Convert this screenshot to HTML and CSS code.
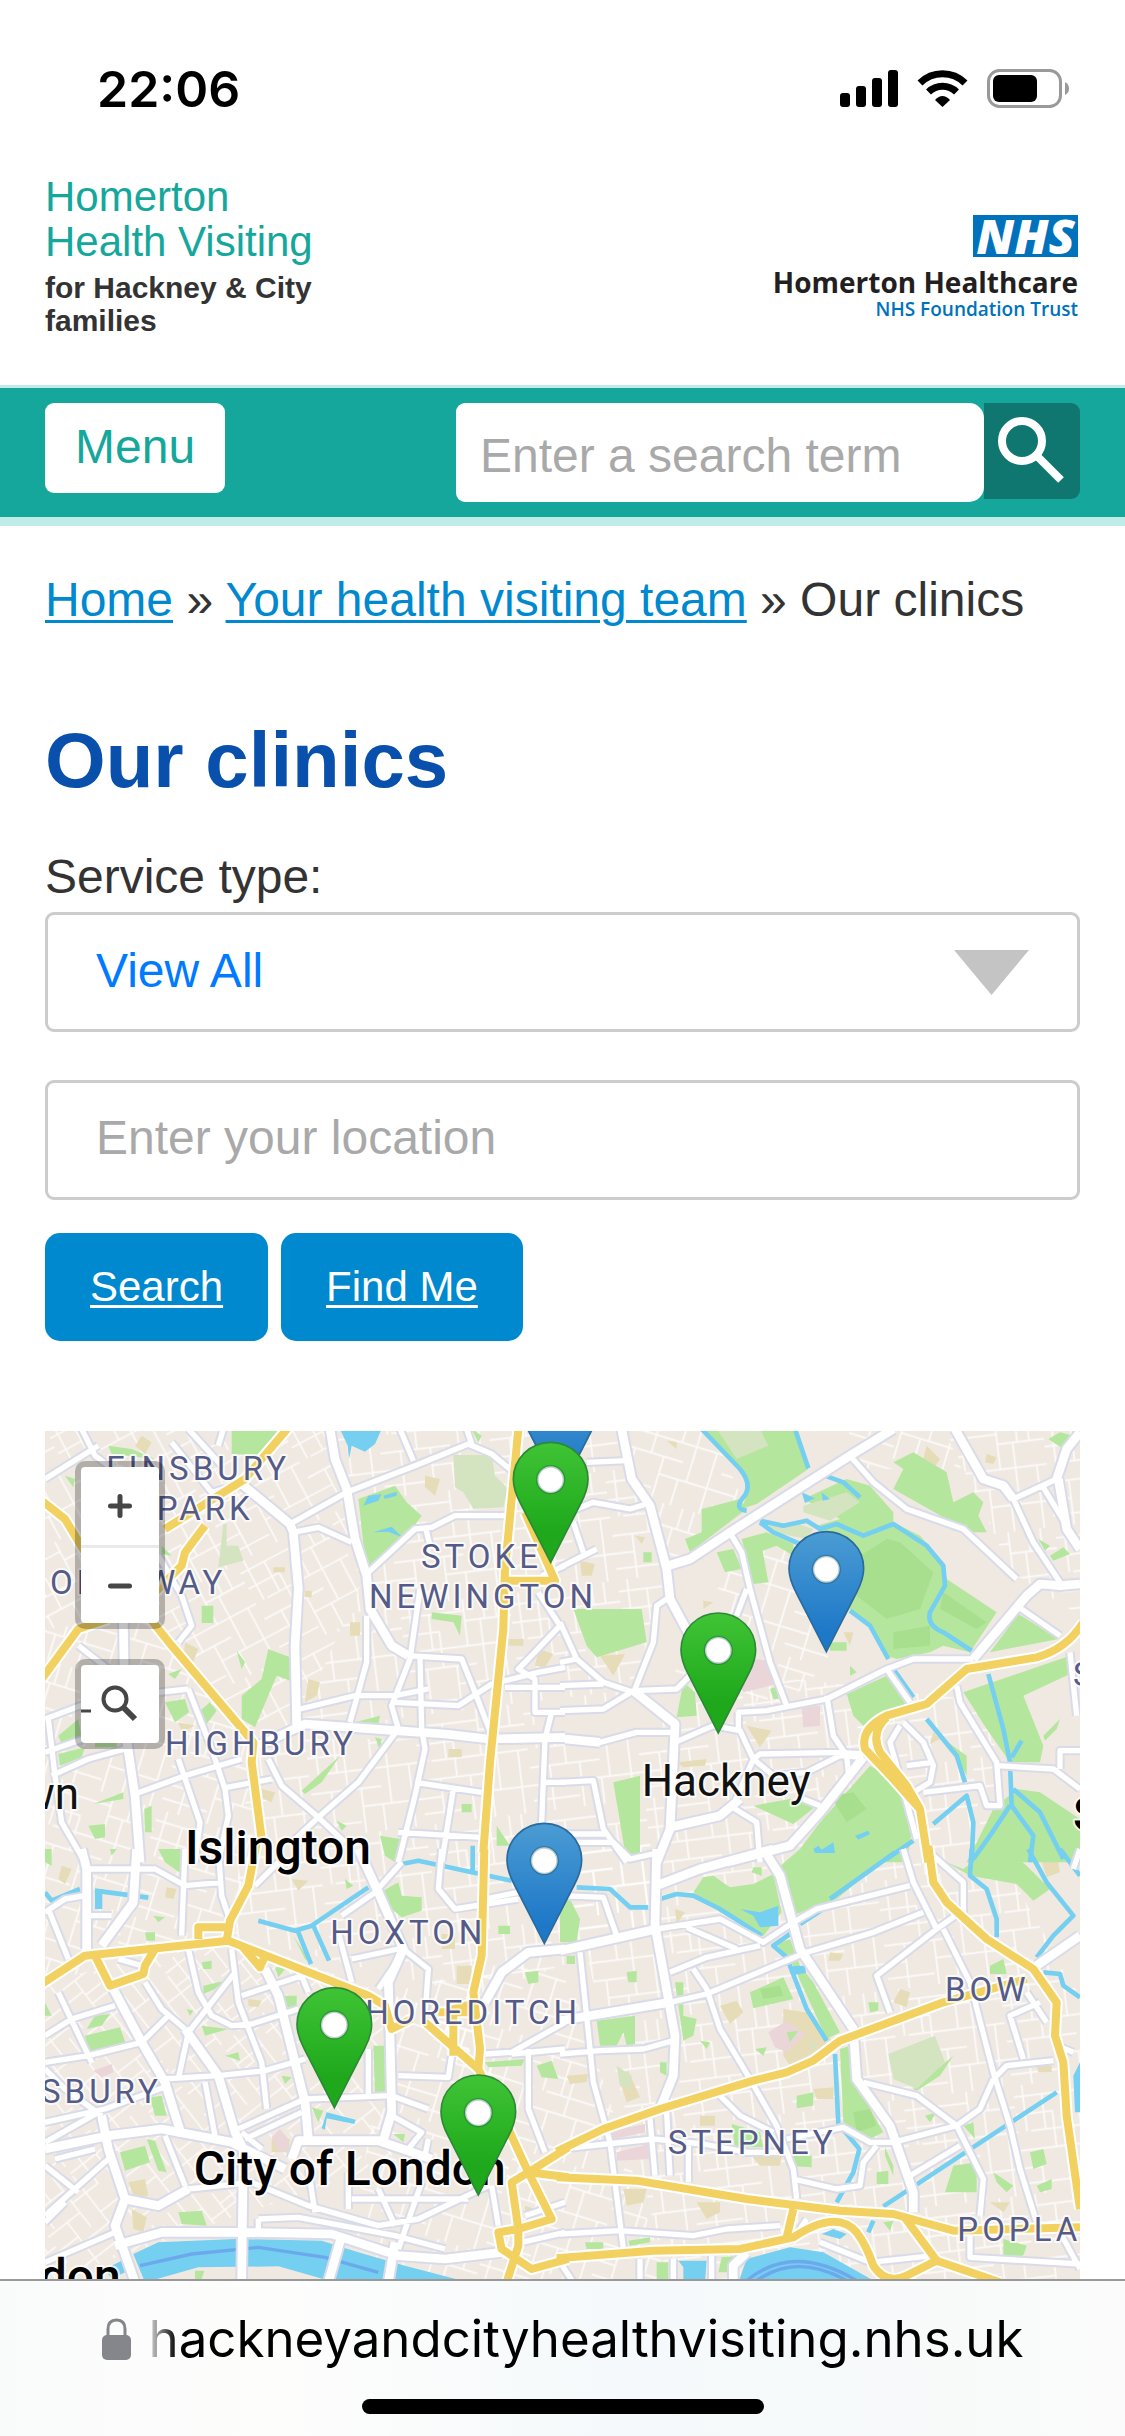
FILE: index.html
```html
<!DOCTYPE html>
<html lang="en">
<head>
<meta charset="utf-8">
<meta name="viewport" content="width=device-width, initial-scale=1">
<title>Our clinics</title>
<link rel="stylesheet" href="styles.css">
</head>
<body>
<div class="status">
  <time class="clock">22:06</time>
  <svg class="status-icons" viewBox="0 0 230 40" aria-hidden="true">
    <rect x="0" y="24" width="10" height="14" rx="3"/><rect x="16" y="17" width="10" height="21" rx="3"/><rect x="32" y="9" width="10" height="29" rx="3"/><rect x="48" y="1" width="10" height="37" rx="3"/>
    <g fill="none" stroke="#000" stroke-width="7"><path d="M80 14A32 32 0 0 1 125 14"/><path d="M88.500 23A20 20 0 0 1 116.500 23"/></g>
    <path d="M95 31Q102.500 23 110 31L102.500 38Z"/>
    <rect x="148.500" y="1.500" width="72" height="36" rx="11" fill="none" stroke="#999" stroke-width="3"/>
    <rect x="153" y="6" width="44" height="27" rx="6"/>
    <path d="M225 13Q229 15 229 19.500T225 26Z" fill="#999"/>
  </svg>
</div>

<header class="masthead">
  <a class="brand" href="#">
    <span class="brand-name">Homerton<br>Health Visiting</span>
    <span class="brand-sub">for Hackney &amp; City<br>families</span>
  </a>
  <a class="trust" href="#">
    <span class="trust-nhs">NHS</span>
    <span class="trust-name">Homerton Healthcare</span>
    <span class="trust-type">NHS Foundation Trust</span>
  </a>
</header>

<nav class="nav">
  <button class="menu" type="button">Menu</button>
  <form class="site-search">
    <input type="search" aria-label="Search the site" placeholder="Enter a search term">
    <button type="button" aria-label="Search">
      <svg viewBox="0 0 68 68"><circle cx="24" cy="24" r="20"/><path d="M38 38L63 63"/></svg>
    </button>
  </form>
</nav>

<main>
  <p class="crumbs"><a href="#">Home</a> » <a href="#">Your health visiting team</a> » Our clinics</p>
  <h1>Our clinics</h1>
  <form class="finder">
    <label for="service">Service type:</label>
    <div class="select">
      <select id="service"><option>View All</option></select>
      <svg viewBox="0 0 75 45" aria-hidden="true"><path d="M0 0H75L37.500 45Z"/></svg>
    </div>
    <input class="place" type="text" aria-label="Location" placeholder="Enter your location">
    <div class="actions"><a href="#">Search</a><a href="#">Find Me</a></div>
  </form>

  <section class="map" aria-label="Map of clinics">
    <svg class="tiles" viewBox="0 6 3105 2544" preserveAspectRatio="xMidYMid slice">
      <defs>
        <linearGradient id="green" x1="0" y1="0" x2="0" y2="1"><stop offset="0" stop-color="#3fc435"/><stop offset=".75" stop-color="#1fa81c"/></linearGradient>
        <linearGradient id="blue" x1="0" y1="0" x2="0" y2="1"><stop offset="0" stop-color="#4b9cd3"/><stop offset=".85" stop-color="#1e78c8"/></linearGradient>
        <path id="pin" d="M0 0L-91 -178Q-112 -218 -112 -250A112 110 0 0 1 112 -250Q112 -218 91 -178Z"/>
        <g id="streets-tile" class="street">
          <path d="M0 34H190M0 88H110M40 140H330M0 196H210M150 250H330M0 296H140M190 64H330M28 0V140M84 34V140M110 88V196M150 196V330M190 0V140M236 64V250M286 0V64M300 140V330M60 196V330M210 250V330M0 250H60M250 0V64"/>
        </g>
        <pattern id="st-a" width="330" height="330" patternUnits="userSpaceOnUse" patternTransform="rotate(-7)"><use href="#streets-tile"/></pattern>
        <pattern id="st-b" width="330" height="330" patternUnits="userSpaceOnUse" patternTransform="rotate(-28) scale(.95)"><use href="#streets-tile"/></pattern>
        <pattern id="st-c" width="330" height="330" patternUnits="userSpaceOnUse" patternTransform="rotate(17)"><use href="#streets-tile"/></pattern>
        <pattern id="st-d" width="330" height="330" patternUnits="userSpaceOnUse" patternTransform="rotate(52) scale(.9)"><use href="#streets-tile"/></pattern>

        <g id="roads">
          <path d="M110 0L150 80L190 110M0 150L160 50M380 40L500 190L590 165M430 0L530 110M535 0L520 50M745 310L820 295L920 340M970 430L1110 300L1160 295L1230 260L1390 260M735 285L905 190L1110 110L1270 45L1340 75L1400 125M1065 0L1105 95M1265 0L1280 45M1140 290L1155 350M340 380L410 500L440 590L400 640M100 650L190 720M0 870L160 810L430 780M20 1040L130 990L240 960M0 970L230 890M10 870L30 1040L50 1180L120 1300M430 780L500 960L540 1080L550 1160L520 1300M400 990L465 1180L450 1300M270 1095L420 1040L590 990M545 1075L680 1050M765 840L930 800L1050 800L1150 780M1050 820L1240 830L1340 765L1480 730L1560 715M1125 480L1095 690L1040 830L1060 900L940 1060L820 1165L740 1240M965 560L965 700L915 880M1125 690L1130 900L1140 960L1110 1100L1060 1300M1090 680L1250 690L1290 790L1340 920M670 990L710 1070L820 1165L900 1240M1110 1060L1310 1090M1225 1080L1190 1300M1060 1210L1310 1225M1500 930L1490 1180M1560 410L1490 440M1480 490L1545 590L1450 690L1420 720L1470 750L1470 850L1560 850M1380 775H1560M1520 850L1500 930M1490 1060H1560"/>
          <path transform="translate(1545)" d="M80 100L200 95M0 260L100 220L210 240L260 225M40 280L70 370M0 415L110 360M320 510L290 530L280 640L225 780M0 845L130 840L220 785L350 780L400 730M0 700L50 690L130 760L220 790M0 580L50 690M0 770L130 765M0 925L120 940L230 910L340 910M345 940L460 890L540 905L580 990L600 975L840 970M515 320L545 370L570 480L630 700L680 830M560 480L530 560M530 850L620 845L800 810L980 720L1060 690L1240 690M535 850V900M800 800L820 920L860 980L865 1030M870 80L940 160L1040 240L1210 300L1370 450M1370 530L1500 620M1360 210L1420 340L1500 460M1360 210L1490 150M1450 175L1520 290M1190 770L1200 820L1310 1000L1320 1130L1280 1130L1260 1070L1090 1090M1310 1010L1480 1020L1560 1080M1500 1020V965H1560M980 720L1050 820M1030 880L1090 940L1120 1010L1110 1060L1060 1090M1020 890L990 940L1010 1010L1070 1230M1040 1010L1120 1000M580 990L640 1040L740 1030L840 980M730 1110L780 1130M510 1130L590 1180L600 1300M520 1130L580 990M0 1060L100 1055L130 1200L200 1300M0 1215L140 1215M1530 670L1550 860"/>
          <path transform="translate(0 1260)" d="M125 60L330 60L420 110L530 100M125 200H200M420 0L410 260M520 0L530 140L550 200M630 110L700 40M890 200L990 130L1070 40M920 330L1060 300M880 250L920 400M1075 300L1150 360L1140 500M1075 310L1000 420M1190 0L1180 120L1230 180L1420 150M1320 150L1420 130M0 190L60 150L120 140M10 180L70 330M220 330L290 350M300 400L350 480L420 540M430 300L460 430L500 500L560 530L620 525L760 480M560 300L580 460L650 640L665 780M570 370L430 550L400 690M0 560L80 510L210 470M0 640L130 620L290 580M290 580L370 500M40 430L140 640M590 440L770 380M770 380L790 430M350 690L520 680L660 665L780 630M0 820L180 780L370 710M0 880L160 790M480 700L510 860M580 840L780 750L1040 740L1150 780M600 870L770 790M970 600V740M1060 680L1210 685L1220 620M1320 615L1400 610L1560 520M1400 615L1560 600M1450 600V780L1500 910M360 860L420 1010M0 1100L190 930M0 950L100 1030M30 930L150 900M430 1020L620 1000L790 1070L1000 1130L1120 1110L1330 1010M920 1050H1270M790 960L810 1090M910 970V1080M1000 1020L1050 1130M0 1240L210 1150M0 1120L60 1060M640 1110L760 1105L1050 1160L1200 1200M640 1110V1150M1130 1000L1060 1200M1040 800L1130 850L1090 900M1150 870L1140 920M1340 1010L1360 1130M1440 1100L1560 1060M650 900L590 850M1430 1180L1560 1150M0 660L60 720L170 800"/>
          <path transform="translate(1545 1260)" d="M0 140L130 145L170 260M60 310L90 600L100 700L150 880L190 1200M0 615L120 605L250 600L340 575M290 240L480 210L610 280L700 220L770 180L1050 110M380 235L530 300M330 370L440 325L530 305L600 290M330 460L440 435L740 310L940 250L1090 190M400 360L440 420L480 540L570 690L650 830L700 960L710 1050M1030 0L1060 100L1130 240M1200 190L1130 240L950 380L990 490M1120 20L1210 100V200M1150 240L1230 400L1300 670L1350 830L1380 960L1430 1120M1440 460L1350 500L1390 630M1300 690L1340 650L1480 635M1300 690L1260 780L1190 830L1000 880L930 880L850 835L680 870M910 700L1070 740L1190 830L1270 990L1260 1100M1050 980L1200 890M950 890L910 940L900 1010L830 1020L700 990M0 900L280 870L430 885L560 910L680 910M270 810L285 980M320 790L330 980M385 890V1000M480 740L540 800L640 850M0 1155L180 1145L400 1160L500 1140L660 1130M0 1240L40 1300M240 1230V1300M340 1230V1300M455 1220V1300M780 1180L930 1240L1120 1220M1230 1150V1225L1560 1245M1500 1150L1560 1260M1560 0L1540 60M1400 430L1460 520M1490 590L1540 610M740 1110L720 1140M0 -20L160 -20L210 30L300 10"/>
        </g>
        <g id="avenues">
          <path d="M855 0L870 90L905 180L930 330L965 440L975 540L1040 650L1090 680M590 165L735 285L745 310L760 480L750 650L755 890M235 570L240 900L270 1100L285 1300M640 950L780 885L1050 905L1200 915L1330 930L1560 925M1560 930L1665 940"/>
          <path transform="translate(1545)" d="M185 0L215 150L270 230L320 420L330 510L400 640M325 410L390 390L510 310L870 80L1000 0M220 785L345 885L340 1000L330 1200L290 1300M330 1195L480 1160L540 1110M910 985L780 1150L690 1250L500 1300M1240 690L1400 500L1440 465L1500 470L1560 465M1185 0L1270 150L1330 170L1360 210M1490 150L1520 60L1560 10M1495 150L1520 300L1560 360M840 975L910 980"/>
          <path transform="translate(0 1260)" d="M110 0L125 60V300M275 0L265 160L170 290M940 0L1000 130L1075 300L1030 400L1035 560L1040 790L1010 890M205 420L290 580L360 700L410 860M420 540L520 680L570 850L595 900L590 1300M660 360L700 440L740 600L780 760L790 870M0 900L190 860L350 840L560 880L640 920L720 960M740 930L760 875L1000 875L1160 930M170 800L190 900L240 1050L210 1130L270 1300M240 1050L340 1070L430 1020M210 1190L350 1150H600L860 1155L1060 1220L1200 1230L1370 1210M890 1160L850 1300M1050 1180L1030 1300M1320 460L1370 370L1450 310L1560 300"/>
          <path transform="translate(1545 1260)" d="M290 0L285 230L345 560L340 680L300 780M290 110L420 60L640 0M610 0L660 80L720 300L880 540L890 690L990 830L1060 1030V1090M0 305L290 240M0 515L330 460M1560 260L1430 350M520 1300L520 1250L560 1210"/>
        </g>
        <g id="trunk">
          <path d="M735 -10L650 90L600 150L520 200L360 300M480 290L420 370L410 410L320 500M-10 215L60 270L120 370M-10 750L100 600L190 570M300 550L380 650L600 910L625 940L620 1000L650 1230M1420 0L1380 420L1375 600L1335 1000L1315 1270M1380 455L1530 455L1440 250"/>
          <path transform="translate(1545)" d="M1570 580Q1520 660 1430 685L1220 720L1100 825L980 860Q900 900 915 960L1000 1050L1080 1140L1105 1300M980 865Q930 910 960 970L1040 1070L1080 1140"/>
          <path transform="translate(0 1260)" d="M-10 405L120 320L550 275L970 440L1020 470L1040 540L1100 510M545 275L555 215L610 110L635 -20M460 270V235H550M150 320L195 410L295 375L300 350L330 300M590 290L645 355L660 320M1318 0L1310 320L1285 430L1305 600L1300 660M1140 520L1300 660L1390 840L1450 970M1225 620V480L1300 460M1180 490H1300M1215 605L1245 605M1570 895L1450 970L1570 985M1450 970L1400 1000L1420 1140L1520 1110L1450 970M1420 1140L1360 1150L1370 1200L1460 1260L1570 1230M1420 1140L1420 1190L1385 1300"/>
          <path transform="translate(1545 1260)" d="M-10 908L130 840L300 780L580 695L680 670L760 635L840 575L1150 460L1400 390M1105 -10L1120 100L1160 160L1280 270L1420 360L1490 460L1485 560L1510 640L1520 800L1560 1080M-10 985L230 995L560 1050L840 1085L1000 1095L1180 1145L1560 1135M-10 1228L280 1205L540 1200L700 1165Q830 1080 890 1150Q920 1190 940 1250Q980 1310 1040 1280L1130 1235M680 1165L700 1080M1030 1100L1130 1235L1320 1300"/>
        </g>
      </defs>

      <rect class="land" width="3105" height="2560"/>
      <path fill="url(#st-b)" d="M0 0H850L960 440L755 890L600 900L330 560L0 600Z"/>
      <path fill="url(#st-a)" d="M850 0H1720L1870 410L1765 790L1340 930L755 890L960 440ZM2245 750L2850 820V1260L3105 1700V2560H1870L1545 1260L1880 1200L1840 850Z"/>
      <path fill="url(#st-c)" d="M1720 0H2000L2100 230L1870 410ZM2060 400L2350 300V700L2220 830L1860 780ZM0 600L330 560L620 930L650 1250L560 1520L0 1660ZM1000 1700L1545 1560L1870 2560H1450L1300 1900Z"/>
      <path fill="url(#st-a)" d="M620 930H1860L1850 1500L1300 1700L560 1520ZM2700 0H3105V560L2900 430Z"/>
      <path fill="url(#st-d)" d="M0 1660L560 1520L1040 1700L1040 2200L0 2560Z"/>
      <path fill="url(#st-c)" d="M1040 1700H1300L1450 2560H900ZM2400 6H2700L2750 120H2420Z"/>

      <g class="built">
        <path d="M1140 140L1185 150L1170 200L1140 175ZM685 415H720V430H685ZM780 485H800V505H780ZM915 580H945V620H915ZM420 640L460 660L440 710L415 690ZM790 750L825 760L815 800L780 820ZM1390 630H1435V650H1390ZM1480 660L1525 675L1500 715L1470 710ZM290 20L320 40L300 75L270 50ZM400 880L450 890L410 910ZM650 1080L690 1090L680 1120L655 1110ZM1210 960H1250V985H1210Z"/>
        <path transform="translate(1545)" d="M320 35L350 40V60ZM60 395L105 405L95 440H65ZM430 515L460 520L430 540ZM120 680L195 675L160 740ZM225 320L255 325L245 345ZM850 610H880L870 650ZM560 890L635 905L600 955ZM350 1000L440 990L435 1010L370 1015ZM1100 50L1140 90L1120 120L1090 90ZM1280 75L1310 85L1300 105L1275 100ZM1120 910L1140 930L1110 945Z"/>
        <path transform="translate(0 1260)" d="M740 90L790 95L760 125ZM365 115L395 120L385 150L360 145ZM1235 350H1280V405H1235ZM680 870L735 870L730 910H680ZM250 1000L300 990L310 1040L270 1050ZM260 1080L305 1105L295 1150L265 1140ZM1190 255H1230V300H1190ZM610 450L650 455L640 475L610 470ZM1440 1070L1470 1080L1440 1095ZM50 50L80 60L60 105L40 90Z"/>
        <path transform="translate(1545 1260)" d="M480 470L530 455L550 490L510 525ZM670 480L740 490L820 580L690 650L670 620ZM810 310L850 315L840 335H805ZM1020 420L1050 430L1040 475L1000 460ZM175 680L205 665L240 745L200 760ZM190 1020H260L250 1060L200 1070ZM410 1060H480V1090L440 1110ZM570 915L665 920L660 950H600ZM20 680L85 675L80 700L30 705ZM1440 20L1490 10L1500 70L1460 85ZM420 800H465V830H420ZM760 720L820 715V750H770ZM1290 1060H1350L1330 1090ZM1430 650H1475V670H1435ZM345 180L375 190L350 225Z"/>
      </g>
      <g class="hospital">
        <path transform="translate(1545)" d="M585 690L630 695L650 765L550 790L530 760ZM725 835L780 830V890L730 895Z"/>
        <path transform="translate(0 1260)" d="M145 665L200 645L205 670L170 685ZM680 865L705 840L730 870L725 910L700 905Z"/>
        <path transform="translate(1545 1260)" d="M625 550L680 515L735 555L680 610L645 595ZM155 845L255 825V850L160 870ZM170 910L265 885L270 930L170 935Z"/>
      </g>
      <g class="park">
        <path d="M560 0H705L650 80L560 75ZM940 210L1050 170L1085 220L1130 260L1095 310L975 415L960 390ZM670 660L735 685V755L695 740L630 895L590 870V800L650 750ZM470 530H505V582H470ZM360 820L420 810L432 850L390 880ZM40 920L100 870L110 925L50 945ZM40 975L120 955L110 985L45 1010ZM465 845L495 820L515 845L485 885ZM298 1140L320 1130V1210H300ZM1005 1220L1065 1230L1050 1300L1020 1280ZM360 1260H415V1300H360ZM130 1190L180 1185V1225L150 1230ZM770 1085L885 980L830 1060L780 1095ZM190 50L260 60L330 90L200 75ZM60 140L90 150L85 175ZM1160 550L1250 560L1245 620L1225 580L1160 570ZM990 925L1010 930L1005 965ZM930 880L1005 860L1000 885ZM1355 1190L1395 1250H1355ZM1250 1125H1280V1150H1250ZM1280 0L1310 20L1300 40ZM150 940H215V955H150ZM575 665L600 700L590 720ZM350 350L380 380L350 375ZM145 1125L235 1090V1110ZM875 1175L905 1190L890 1205ZM370 735L410 720L390 750Z"/>
        <path transform="translate(1545)" d="M430 0H705L745 120L590 225L545 240L570 170L540 120ZM425 240L540 210L560 240L390 370L375 330L425 310ZM730 210L860 150L930 170L1000 250V280L1080 320L1150 400L1160 450L1310 550L1230 670L1150 650L1110 670L1010 690L980 680L930 590L870 540L800 620L790 320L770 290L840 270ZM545 330L620 310L700 345L700 380L650 350L608 365L625 460L580 465ZM470 370L520 360L545 420L495 430ZM1000 180L1030 120L1000 100L1060 70L1160 130L1180 220L1240 190L1270 220L1255 260L1280 310L1230 310ZM860 795L980 740L1040 830L910 890L880 860ZM1210 790L1530 680V735L1390 800L1450 950L1440 1000L1350 1000L1280 900ZM1290 670L1375 555L1495 630ZM930 1010L1020 1060L1060 1180L1040 1300H690L780 1180ZM40 540H245L260 640L110 685L80 650ZM160 1060L240 1040V1270L200 1300ZM370 760L405 790L410 860L350 865ZM580 1130L690 1110L770 1130L700 1185ZM1370 1080L1440 1090L1560 1170V1300H1220L1300 1140ZM250 370H275V400H250ZM1435 330L1470 350L1455 365ZM1470 380L1510 355L1530 375L1480 395ZM1450 920L1500 870L1490 900L1455 935ZM630 780L655 770V810H640ZM1465 30L1500 10L1540 20L1510 60ZM870 710L890 730L870 740ZM1150 930L1220 980L1220 1040L1190 980ZM810 640L860 640V665H810Z"/>
        <path transform="translate(0 1260)" d="M1015 125L1060 100L1070 140L1130 145V185L1070 205L1040 180ZM120 560L225 535L245 590L160 620L130 605ZM150 500L195 495L170 530L125 540ZM470 340L500 335V360H475ZM475 410L540 395L510 420L475 435ZM470 530L550 540L480 560ZM315 745L350 740L365 800L330 800ZM225 910L300 890L315 940L240 965ZM305 870L330 875L365 970L340 965ZM400 1090L470 1085L485 1130L410 1125ZM985 590L1020 590L1025 730H990ZM720 440H755V475H720ZM800 775L835 785L820 820ZM1045 855L1080 855L1075 880ZM1475 650L1520 635L1540 690L1490 685ZM1320 640L1440 630L1430 650L1330 655ZM1440 370L1480 365V400L1450 405ZM1360 230H1395V255H1360ZM900 90L925 110L905 120ZM690 355H725L700 385ZM540 620L580 610L585 635ZM710 680L740 685L720 705ZM195 0H215L200 20ZM0 460L20 500L0 500ZM340 0H420L410 75L360 40ZM300 250H330V275H305ZM325 200L360 205L340 220ZM425 480L445 485L435 500ZM0 40L20 50V0H0ZM450 1265H478L470 1290H450ZM745 260L800 345L780 330Z"/>
        <path transform="translate(1545 1260)" d="M720 0H1010L830 150L710 195L650 60ZM400 130L430 85L460 80L510 115L580 105L640 75L665 190L610 262L480 190ZM570 430L670 385L700 450L580 478ZM650 285L690 270L720 350L760 400L840 550L800 570L700 350ZM840 600L870 590L880 690L970 850L930 870L850 820ZM110 515L225 500V585L200 590L190 550L170 590H120ZM345 400H370V500L410 510L400 560L370 575ZM0 150H30L60 210L50 280L0 280ZM710 740L760 730V770L710 778ZM1180 950L1250 940V1030H1155ZM1410 910L1450 900L1460 945L1420 960ZM1160 40L1210 60L1290 0H1340L1400 50L1470 120L1420 155L1370 105L1230 80ZM670 920H755V955L680 950ZM1290 350L1330 330L1340 375L1290 375ZM680 550L715 545L690 580ZM200 370L230 365V400L205 400ZM580 55H605V80L575 70ZM515 825L600 850L610 895H525ZM290 1240H325V1300H290ZM485 1225L540 1220L510 1270H475ZM205 1175L270 1165V1180L210 1190ZM75 1180H130V1200H80ZM1300 970L1360 1010L1340 1030L1310 1000ZM1430 1010L1475 990V1020L1440 1030ZM1210 830L1240 820L1245 870ZM950 970L985 965V1005H950ZM1060 720L1180 620L1140 680L1070 725ZM20 320H45V345H20ZM975 895L1000 950L1000 980L975 920ZM925 460H955V485L930 490ZM1330 1170L1400 1190L1390 1220H1330ZM1095 800L1130 790L1110 820ZM585 600L620 595L610 620ZM300 640H320V680L300 670ZM420 575L450 580L440 600ZM970 1120L1000 1115L990 1145Z"/>
      </g>
      <g class="park-pale">
        <path d="M1225 78H1340L1350 140L1390 180L1375 235L1285 240L1255 190L1230 175ZM535 285H545L545 350L580 350L595 395L520 415Z"/>
        <path transform="translate(1545)" d="M470 0H600L625 50L530 90ZM730 230L860 190L900 220L810 275L730 250ZM620 290L700 280L760 300L740 330L640 310Z"/>
        <path transform="translate(1545 1260)" d="M985 615L1125 560L1155 640L1070 720L1000 690ZM170 650L215 680L210 720L180 710ZM740 570L770 590L760 605Z"/>
      </g>
      <g class="park-deep" transform="translate(1545)">
        <path d="M900 380L980 330L1020 340L1120 430L1080 540L980 570L890 500ZM1150 490L1280 580L1250 600L1140 540ZM1000 610L1110 590V650L1000 660ZM810 1100L880 1090L920 1140L860 1180ZM600 1680L660 1670L670 1700L610 1710ZM880 2050L930 2040L950 2090L890 2110Z"/>
      </g>
      <g class="lake">
        <path d="M885 0H1010L990 45L960 68L920 50L912 90L908 50ZM955 230L970 200L1010 195L1000 215ZM1015 200L1055 188V200L1020 210ZM985 310L1040 293L1072 325L1030 308Z"/>
        <path transform="translate(1545)" d="M725 190L765 208L735 222ZM785 190L810 210L788 215ZM885 1220L925 1205L930 1215L895 1232ZM760 1260L775 1250L785 1262L820 1240L825 1272L765 1272Z"/>
        <path transform="translate(0 1260)" d="M265 1215L340 1180L570 1170L830 1175L940 1210L1080 1250L1270 1300H870L700 1252L460 1255L300 1300ZM180 1260L230 1235L240 1270L200 1290ZM150 120H172V180H150ZM845 790L932 812L928 825L845 808L840 842L830 838Z"/>
        <path transform="translate(1545 1260)" d="M535 1300L560 1230L690 1195L790 1210L950 1300ZM355 1235H440L435 1300H370V1255ZM785 1155L820 1140L860 1155L840 1170ZM540 180L600 190L655 170V230L600 235L580 200ZM690 352L735 350L738 372L700 378ZM1540 680L1560 640V790H1545Z"/>
      </g>
      <g class="river">
        <path transform="translate(1545)" d="M425 0L540 120Q580 170 550 205T560 245M705 0L745 118M795 140L850 160L900 205M600 275L670 290L740 275L780 300L830 285L910 320L1000 285L1100 350L1150 410L1155 470L1110 550Q1100 590 1150 610L1235 665M600 280L640 310L720 345M870 545L930 590L985 690M1000 720L1060 805M1285 735L1330 900L1350 1000L1355 1130L1420 1220L1410 1300M1355 985L1385 935M1360 1080L1440 1150L1510 1290M1350 1130L1290 1220L1240 1290M1100 870L1190 980L1215 1060M1120 1185L1220 1100L1240 1180L1235 1300M980 1290L1060 1235"/>
        <path transform="translate(0 1260)" d="M0 130L20 155L105 120M150 125L310 146M640 215L750 245L800 230L970 115M758 245L798 345M805 230L852 335M1070 45L1120 35L1400 95M1283 -10V70"/>
        <path transform="translate(1545 1260)" d="M50 115L150 120L210 175L265 175M300 150L350 135L400 140L480 180L605 260M1005 10L810 150M790 180L720 225M690 255L640 290L680 325L740 480L800 575M825 615L835 825L865 860L898 900L880 970L830 1060M940 1115L925 1150M970 1072L1490 730M1235 0L1230 80L1280 120L1310 210L1310 265M1405 0L1460 100L1540 200L1480 260L1430 325M1450 370L1500 375L1510 410L1560 445M1500 0L1560 80"/>
      </g>
      <g class="channel">
        <path transform="translate(0 1260)" d="M285 1250L440 1215L640 1195L840 1225L1000 1270"/>
        <path transform="translate(1545 1260)" d="M560 1295Q700 1180 890 1295M590 1295Q710 1210 860 1295"/>
      </g>

      <use class="road-edge" href="#roads"/>
      <use class="avenue-edge" href="#avenues"/>
      <use class="road-fill" href="#roads"/>
      <use class="avenue-fill" href="#avenues"/>
      <use class="trunk-edge" href="#trunk"/>
      <use class="trunk-fill" href="#trunk"/>

      <g class="district">
        <text x="184" y="153">FINSBURY</text>
        <text x="335" y="272">PARK</text>
        <text x="15" y="494">OLLOWAY</text>
        <text x="1128" y="418">STOKE</text>
        <text x="972" y="537">NEWINGTON</text>
        <text x="360" y="978">HIGHBURY</text>
        <text x="856" y="1545">HOXTON</text>
        <text x="890" y="1786">SHOREDITCH</text>
        <text x="-12" y="2021">SBURY</text>
        <text x="1868" y="2176">STEPNEY</text>
        <text x="2700" y="1716">BOW</text>
        <text x="2737" y="2437">POPLAR</text>
        <text x="3084" y="770">S</text>
      </g>
      <g class="town">
        <text x="1790" y="1100">Hackney</text>
        <text x="-70" y="1140">wn</text>
      </g>
      <g class="city">
        <text x="420" y="1306">Islington</text>
        <text x="446" y="2268">City of London</text>
        <text x="-16" y="2592">don</text>
        <text x="3084" y="1206">S</text>
      </g>

      <g class="pins">
        <g fill="url(#blue)" stroke="#2a6a9c"><use href="#pin" x="1545" y="190"/><use href="#pin" x="2344" y="668"/><use href="#pin" x="1498" y="1543"/></g>
        <g fill="url(#green)" stroke="#2c8a36"><use href="#pin" x="1517" y="400"/><use href="#pin" x="2020" y="912"/><use href="#pin" x="868" y="2036"/><use href="#pin" x="1300" y="2298"/></g>
        <g class="hole"><circle cx="1517" cy="152" r="40"/><circle cx="2344" cy="421" r="40"/><circle cx="1498" cy="1295" r="40"/><circle cx="2020" cy="664" r="40"/><circle cx="868" cy="1788" r="40"/><circle cx="1300" cy="2051" r="40"/></g>
      </g>
    </svg>
    <div class="controls">
      <div class="control">
        <button type="button" aria-label="Zoom in"><svg viewBox="0 0 24 24"><path d="M2.500 12H21.500M12 2.500V21.500"/></svg></button>
        <button type="button" aria-label="Zoom out"><svg viewBox="0 0 24 24"><path d="M2.500 12H21.500"/></svg></button>
      </div>
      <div class="control">
        <button class="find" type="button" aria-label="Search the map"><svg viewBox="0 0 78 78"><g fill="none" stroke="#464646"><circle cx="34" cy="34" r="11.500" stroke-width="4"/><path d="M42 42L54 54" stroke-width="6" stroke-linecap="butt"/><path d="M0 46H10" stroke-width="3" stroke-linecap="butt"/></g></svg></button>
      </div>
    </div>
  </section>
</main>

<footer class="browser">
  <div class="address">
    <svg viewBox="0 0 29 42" aria-hidden="true"><rect y="17" width="29" height="25" rx="5"/><path d="M6 19V11Q6 2 14.500 2T23 11V19" fill="none" stroke="#85868b" stroke-width="3"/></svg>
    <span>hackneyandcityhealthvisiting.nhs.uk</span>
  </div>
  <div class="home-bar"></div>
</footer>
</body>
</html>
```
FILE: styles.css
```css
* { box-sizing: border-box; }

body {
  margin: 0;
  min-height: 100vh;
  display: flex;
  flex-direction: column;
  background: #fff;
  color: #333;
  font: 48px/58px "Liberation Sans", Arial, sans-serif;
}

button, input, select { font: inherit; margin: 0; }
button { border: 0; padding: 0; }
a { color: #0089cf; text-decoration-thickness: 3px; text-underline-offset: 4px; }
svg { display: block; }

/* Phone status bar */
.status {
  display: flex;
  justify-content: space-between;
  align-items: center;
  height: 174px;
  padding: 4px 55px 0 97px;
}
.clock {
  color: #000;
  font: 600 50px/60px Inter, sans-serif;
}
.status-icons { width: 230px; height: 40px; }

/* Masthead */
.masthead {
  display: flex;
  justify-content: space-between;
  align-items: flex-start;
  padding: 0 45px 48px;
}
.masthead a { text-decoration: none; }
.brand { display: grid; gap: 7px; }
.brand-name { color: #15a79c; font-size: 42px; line-height: 45px; }
.brand-sub { color: #333; font-size: 30px; font-weight: 700; line-height: 33px; }
.trust {
  display: flex;
  flex-direction: column;
  align-items: flex-end;
  padding: 41px 2px 0 0;
  font-family: "Open Sans", "Noto Sans", sans-serif;
  font-weight: 600;
  color: #231f20;
}
.trust-nhs {
  width: 105px;
  background: #0072bc;
  color: #fff;
  font-size: 48px;
  font-weight: 800;
  font-style: italic;
  line-height: 42px;
  text-align: center;
}
.trust-name { margin-top: 8px; font-size: 28px; font-weight: 700; line-height: 34px; }
.trust-type { color: #0072bc; font-size: 19px; line-height: 20px; }

/* Navigation bar */
.nav {
  display: flex;
  justify-content: space-between;
  align-items: flex-start;
  padding: 15px 45px;
  background: #15a79c;
  border-top: 3px solid #bfebe9;
  border-bottom: 9px solid #bfebe9;
}
.menu {
  height: 90px;
  padding: 0 30px 2px;
  border-radius: 9px;
  background: #fff;
  color: #15a79c;
}
.site-search { display: flex; align-items: flex-start; }
.site-search input {
  width: 528px;
  height: 99px;
  padding: 6px 24px 0;
  border: 0;
  border-radius: 9px 15px 15px 9px;
  background: #fff;
  appearance: none;
}
.site-search button {
  display: grid;
  place-items: center;
  width: 96px;
  height: 96px;
  border-radius: 0 9px 9px 0;
  background: #0f776f;
}
.site-search svg { width: 68px; height: 68px; fill: none; stroke: #fff; stroke-width: 8px; }
::placeholder { color: #a9a9a9; opacity: 1; }

/* Page content */
main {
  flex: 1;
  display: flex;
  flex-direction: column;
  padding: 45px 45px 0;
}
.crumbs { margin: 0; }
h1 {
  margin: 86px 0 42px;
  color: #0850ab;
  font-size: 78px;
  line-height: 90px;
}
.finder { display: flex; flex-direction: column; }
.finder label { margin-bottom: 5px; line-height: 60px; }
.select { display: grid; align-items: center; margin-bottom: 48px; }
.select > * { grid-area: 1 / 1; }
.select select, .place {
  width: 100%;
  height: 120px;
  padding: 0 48px 6px;
  border: 3px solid #ccc;
  border-radius: 9px;
  background: #fff;
  color: #007aff;
  appearance: none;
}
.select select { padding-bottom: 3px; }
.select svg {
  justify-self: end;
  width: 75px;
  height: 45px;
  margin-right: 51px;
  fill: #c4c4c4;
  pointer-events: none;
}
.actions { display: flex; gap: 13px; margin: 33px 0 90px; }
.actions a {
  padding: 0 45px;
  border-radius: 15px;
  background: #0089cf;
  color: #fff;
  font-size: 42px;
  line-height: 108px;
}

/* Map */
.map {
  position: relative;
  flex: 1 0 846px;
  overflow: hidden;
}
.tiles { position: absolute; inset: 0; width: 100%; height: 100%; }
.land { fill: #f0e9e2; }
.street { fill: none; stroke: #fff; stroke-width: 5px; opacity: .8; }
.built { fill: #e6ddb8; }
.hospital { fill: #ead5d8; }
.park { fill: #b5e69d; }
.park-pale { fill: #d4e4c0; }
.park-deep { fill: #a8df8e; }
.lake { fill: #75cff0; }
.river { fill: none; stroke: #75cff0; stroke-width: 14px; stroke-linejoin: round; }
.channel { fill: none; stroke: #6ca9ec; stroke-width: 10px; }
.road-edge, .road-fill, .avenue-edge, .avenue-fill, .trunk-edge, .trunk-fill {
  fill: none;
  stroke: #fff;
  stroke-linejoin: round;
}
.road-edge { stroke: #d9dbe9; stroke-width: 28px; }
.road-fill { stroke-width: 16px; }
.avenue-edge { stroke: #d9dbe9; stroke-width: 38px; }
.avenue-fill { stroke-width: 26px; }
.trunk-edge { stroke-width: 36px; }
.trunk-fill { stroke: #f2d160; stroke-width: 24px; }

.district, .town, .city {
  font-family: Roboto, sans-serif;
  paint-order: stroke;
  stroke: rgba(255, 255, 255, .75);
  stroke-width: 12px;
  stroke-linejoin: round;
}
.district { fill: #555b88; font-size: 99px; letter-spacing: 12px; }
.town { fill: #111; font-size: 132px; }
.city { fill: #000; font-size: 144px; font-weight: 500; }
.pins { stroke-width: 5px; }
.hole { fill: #fff; stroke: rgba(0, 60, 60, .25); stroke-width: 8px; }

.controls {
  position: absolute;
  top: 30px;
  left: 30px;
  display: grid;
  gap: 30px;
}
.control {
  border: 6px solid rgba(0, 0, 0, .25);
  border-radius: 10px;
  background: #fff;
  background-clip: padding-box;
}
.control button {
  display: grid;
  place-items: center;
  width: 78px;
  height: 78px;
  background: none;
}
.control button + button { border-top: 3px solid #eaeaea; }
.control svg { width: 24px; height: 24px; stroke: #464646; stroke-width: 5px; stroke-linecap: round; }
.control .find svg { width: 78px; height: 78px; }

/* Browser toolbar */
.browser {
  display: flex;
  flex-direction: column;
  align-items: center;
  height: 157px;
  padding-top: 28px;
  border-top: 2px solid #999;
  background: linear-gradient(90deg, #f9fbfa, #fdfdfc 25%, #f5f9fb 55%, #fafbfa);
  color: #000;
}
.address {
  display: flex;
  align-items: center;
  gap: 18px;
  font: 51px/60px Inter, sans-serif;
}
.address svg { width: 29px; height: 42px; fill: #85868b; }
.address span {
  -webkit-mask-image: linear-gradient(90deg, rgba(0, 0, 0, .15), #000 28px);
  mask-image: linear-gradient(90deg, rgba(0, 0, 0, .15), #000 28px);
}
.home-bar {
  width: 402px;
  height: 15px;
  margin-top: 30px;
  border-radius: 8px;
  background: #000;
}
```
